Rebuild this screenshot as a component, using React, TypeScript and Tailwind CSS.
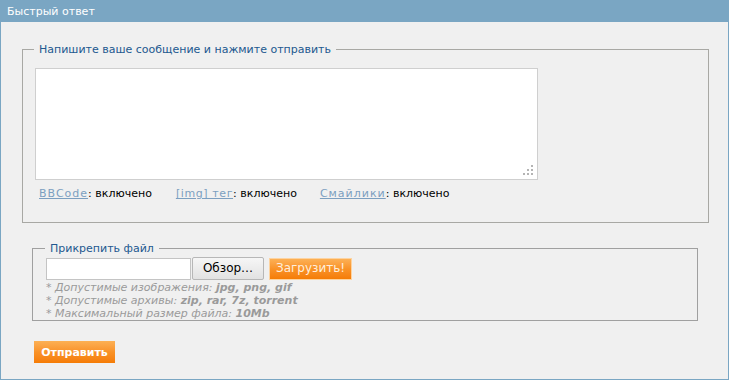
import React from "react";

function Grip() {
  const dots: [number, number][] = [
    [8, 0],
    [4, 4],
    [8, 4],
    [0, 8],
    [4, 8],
    [8, 8],
  ];
  return (
    <svg className="absolute right-[4px] bottom-[4px]" width="10" height="10" viewBox="0 0 10 10">
      {dots.map(([x, y], i) => (
        <rect key={i} x={x} y={y} width="2" height="2" fill="#b4b4b4" />
      ))}
    </svg>
  );
}

export default function App() {
  const font = { fontFamily: "'DejaVu Sans', Verdana, sans-serif" };
  return (
    <div
      className="w-[729px] h-[380px] border border-[#7aa6c3] bg-[#f0f0f0] text-[11px] leading-[13px] text-black"
      style={font}
    >
      <div className="h-[21px] bg-[#7aa6c3] text-white pl-[6px] leading-[21px] text-[11px]">
        Быстрый ответ
      </div>
      <div className="pt-[21px] pl-[21px]">
        <fieldset className="w-[687px] border border-[#a8a8a4] pl-[12px] pt-[12px] pb-[22px]">
          <legend className="px-[5px] text-[#22588f] leading-[13px] ml-[-1px]">
            Напишите ваше сообщение и нажмите отправить
          </legend>
          <div className="relative w-[503px] h-[112px] bg-white border border-[#cfcfcf]">
            <Grip />
          </div>
          <div className="flex ml-[4px] mt-[7px] leading-[13px]">
            <span>
              <a className="text-[#7c9fc0] underline tracking-[1px]">BBCode</a>: включено
            </span>
            <span className="ml-[24px]">
              <a className="text-[#7c9fc0] underline tracking-[0.6px]">[img] тег</a>: включено
            </span>
            <span className="ml-[23px]">
              <a className="text-[#7c9fc0] underline tracking-[1px]">Смайлики</a>: включено
            </span>
          </div>
        </fieldset>

        <fieldset className="w-[666px] ml-[10px] mt-[19px] border border-[#a0a0a0] pl-[13px] pt-[2px] pb-0">
          <legend className="px-[5px] text-[#22588f] leading-[13px] ml-[-1px]">
            Прикрепить файл
          </legend>
          <div className="flex items-center">
            <div className="w-[145px] h-[22px] bg-white border border-[#c4c4c4]" />
            <div className="ml-[1px] w-[72px] h-[23px] border border-[#b7b7b7] rounded-[2px] bg-gradient-to-b from-[#f6f6f6] to-[#e2e2e2] flex items-center justify-center text-[12px] text-black">
              Обзор…
            </div>
            <div className="ml-[5px] w-[83px] h-[22px] bg-gradient-to-b from-[#fcb054] via-[#f99226] to-[#f57c04] border border-[#fdd3a0] flex items-center justify-center text-[12px] text-[#ffeedd]">
              Загрузить!
            </div>
          </div>
          <div className="mt-[1px] text-[#9a9a9a] italic leading-[13px]">
            <div>
              * Допустимые изображения: <b>jpg, png, gif</b>
            </div>
            <div>
              * Допустимые архивы: <b>zip, rar, 7z, torrent</b>
            </div>
            <div>
              * Максимальный размер файла: <b>10Mb</b>
            </div>
          </div>
        </fieldset>

        <div className="ml-[12px] mt-[20px] w-[81px] h-[22px] bg-gradient-to-b from-[#fcb054] via-[#f99226] to-[#f57c04] flex items-center justify-center text-white font-bold text-[11px]">
          Отправить
        </div>
      </div>
    </div>
  );
}
